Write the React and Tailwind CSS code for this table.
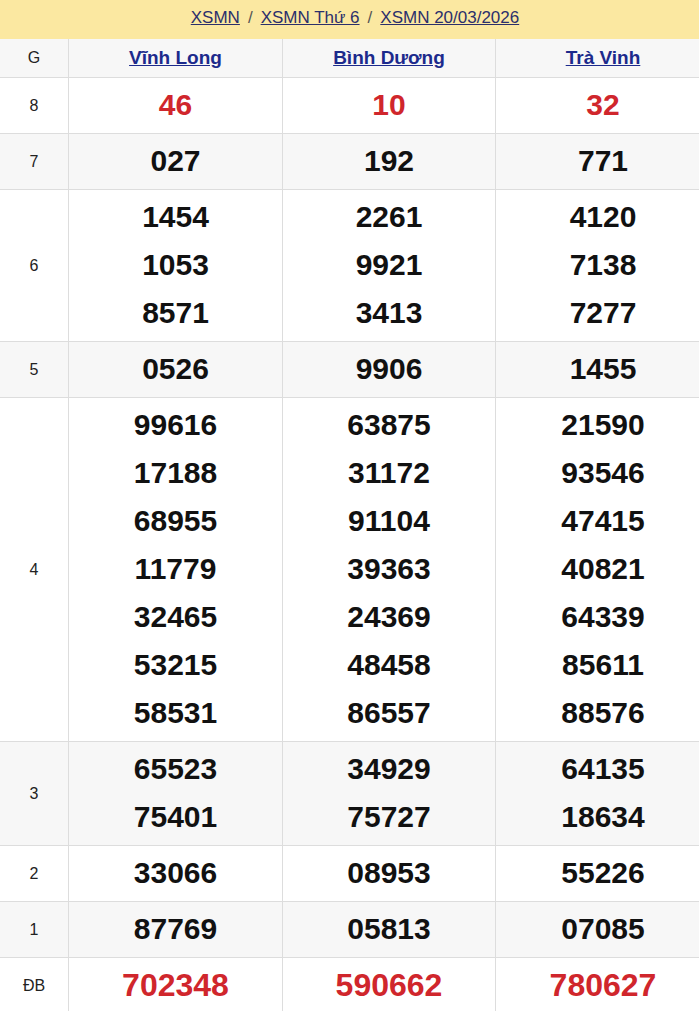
import React from "react";

const provinces = ["Vĩnh Long", "Bình Dương", "Trà Vinh"];

const rows = [
  { g: "8", red: true, vals: [["46"], ["10"], ["32"]] },
  { g: "7", vals: [["027"], ["192"], ["771"]] },
  { g: "6", vals: [["1454", "1053", "8571"], ["2261", "9921", "3413"], ["4120", "7138", "7277"]] },
  { g: "5", vals: [["0526"], ["9906"], ["1455"]] },
  {
    g: "4",
    vals: [
      ["99616", "17188", "68955", "11779", "32465", "53215", "58531"],
      ["63875", "31172", "91104", "39363", "24369", "48458", "86557"],
      ["21590", "93546", "47415", "40821", "64339", "85611", "88576"],
    ],
  },
  { g: "3", vals: [["65523", "75401"], ["34929", "75727"], ["64135", "18634"]] },
  { g: "2", vals: [["33066"], ["08953"], ["55226"]] },
  { g: "1", vals: [["87769"], ["05813"], ["07085"]] },
  { g: "ĐB", red: true, big: true, vals: [["702348"], ["590662"], ["780627"]] },
];

export default function App() {
  return (
    <div className="w-full overflow-hidden bg-white font-['Liberation_Sans',Arial,sans-serif]">
      <div className="w-[710px]">
        <div className="h-[39px] bg-[#fbe8a1] flex items-center justify-center text-[17px] text-[#2b2f6b] pb-[3px]">
          <a className="underline">XSMN</a>
          <span className="mx-[8px] text-[#555]">/</span>
          <a className="underline">XSMN Thứ 6</a>
          <span className="mx-[8px] text-[#555]">/</span>
          <a className="underline">XSMN 20/03/2026</a>
        </div>
        <div className="grid grid-cols-[69px_214px_213px_214px] bg-[#f7f7f7] border-b border-[#dddddd] h-[39px]">
          <div className="flex items-center justify-center text-[16px] text-[#222] border-r border-[#dddddd]">G</div>
          {provinces.map((p, i) => (
            <div
              key={p}
              className={`flex items-center justify-center ${i < 2 ? "border-r border-[#dddddd]" : ""}`}
            >
              <a className="underline font-bold text-[19px] text-[#1c2a8c]">{p}</a>
            </div>
          ))}
        </div>
        {rows.map((r, idx) => (
          <div
            key={r.g}
            className={`grid grid-cols-[69px_214px_213px_214px] border-b border-[#dddddd] ${idx % 2 === 1 ? "bg-[#f7f7f7]" : "bg-white"}`}
          >
            <div className="flex items-center justify-center text-[16px] text-[#222] border-r border-[#dddddd]">{r.g}</div>
            {r.vals.map((col, ci) => (
              <div
                key={ci}
                className={`flex flex-col items-center pt-[3px] pb-[4px] ${ci < 2 ? "border-r border-[#dddddd]" : ""}`}
              >
                {col.map((v) => (
                  <div
                    key={v}
                    className={`h-[48px] leading-[48px] font-bold ${r.big ? "text-[32px]" : "text-[30px]"} ${r.red ? "text-[#d0262c]" : "text-[#111]"}`}
                  >
                    {v}
                  </div>
                ))}
              </div>
            ))}
          </div>
        ))}
      </div>
    </div>
  );
}
